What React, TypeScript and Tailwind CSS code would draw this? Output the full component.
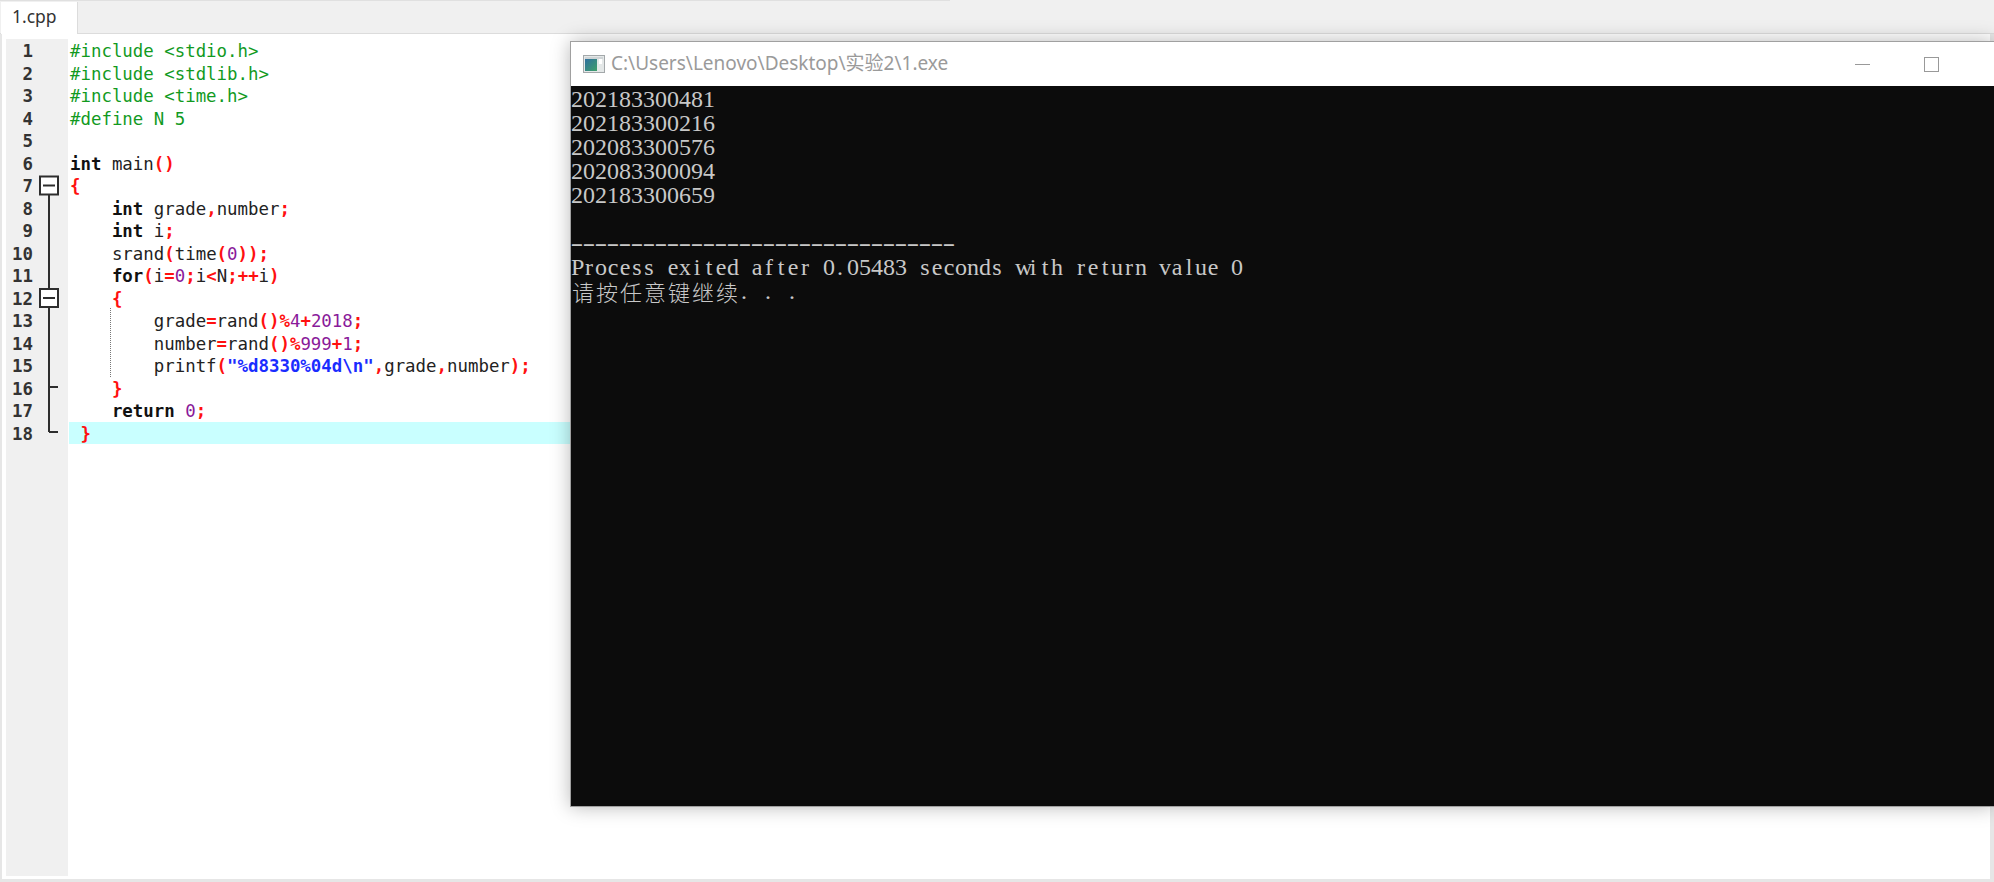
const codeFont = "font-['DejaVu_Sans_Mono','Liberation_Mono',monospace]";

type Kind = "k" | "t" | "p" | "n" | "s" | "d" | "x";
type Tok = [Kind, string];

const kindClass: Record<Kind, string> = {
  k: "font-bold text-[#111111]",
  t: "text-[#222222]",
  p: "font-bold text-[#ff1010]",
  n: "text-[#8a1a9a]",
  s: "font-bold text-[#1a2cff]",
  d: "text-[#129a1f]",
  x: "text-[#222222]",
};

const lines: Tok[][] = [
  [["d", "#include <stdio.h>"]],
  [["d", "#include <stdlib.h>"]],
  [["d", "#include <time.h>"]],
  [["d", "#define N 5"]],
  [],
  [["k", "int"], ["t", " main"], ["p", "()"]],
  [["p", "{"]],
  [["t", "    "], ["k", "int"], ["t", " grade"], ["p", ","], ["t", "number"], ["p", ";"]],
  [["t", "    "], ["k", "int"], ["t", " i"], ["p", ";"]],
  [["t", "    srand"], ["p", "("], ["t", "time"], ["p", "("], ["n", "0"], ["p", "));"]],
  [["t", "    "], ["k", "for"], ["p", "("], ["t", "i"], ["p", "="], ["n", "0"], ["p", ";"], ["t", "i"], ["p", "<"], ["t", "N"], ["p", ";++"], ["t", "i"], ["p", ")"]],
  [["t", "    "], ["p", "{"]],
  [["t", "        grade"], ["p", "="], ["t", "rand"], ["p", "()%"], ["n", "4"], ["p", "+"], ["n", "2018"], ["p", ";"]],
  [["t", "        number"], ["p", "="], ["t", "rand"], ["p", "()%"], ["n", "999"], ["p", "+"], ["n", "1"], ["p", ";"]],
  [["t", "        printf"], ["p", "("], ["s", "\"%d8330%04d\\n\""], ["p", ","], ["t", "grade"], ["p", ","], ["t", "number"], ["p", ");"]],
  [["t", "    "], ["p", "}"]],
  [["t", "    "], ["k", "return"], ["t", " "], ["n", "0"], ["p", ";"]],
  [["t", " "], ["p", "}"]],
];

function Fold() {
  const stroke = "#2e2e2e";
  return (
    <svg className="absolute left-0 top-0" width="64" height="445" viewBox="0 0 64 445" fill="none">
      <path d="M49 195V288M49 307V432M49 387H58M49 432H58" stroke={stroke} strokeWidth="2" />
      <rect x="40" y="176.5" width="18" height="18" fill="#fff" stroke={stroke} strokeWidth="2" />
      <path d="M43 185.5H55" stroke={stroke} strokeWidth="2" />
      <rect x="40" y="289" width="18" height="18" fill="#fff" stroke={stroke} strokeWidth="2" />
      <path d="M43 298H55" stroke={stroke} strokeWidth="2" />
    </svg>
  );
}

function Term({ text }: { text: string }) {
  return (
    <div className="h-[24px] flex leading-[24px]">
      {Array.from(text).map((c, i) => {
        const cjk = c.charCodeAt(0) > 255;
        if (c === "-")
          return (
            <span key={i} className="inline-block w-[12px] text-center scale-x-[1.6]">
              -
            </span>
          );
        return (
          <span
            key={i}
            className={
              cjk
                ? "inline-block w-[24px] text-center font-['Noto_Sans_CJK_SC',serif] font-light text-[22px]"
                : c === "."
                  ? "inline-block w-[12px] pl-[2px] text-left"
                  : "inline-block w-[12px] text-center whitespace-pre"
            }
          >
            {c}
          </span>
        );
      })}
    </div>
  );
}

const output = [
  "202183300481",
  "202183300216",
  "202083300576",
  "202083300094",
  "202183300659",
  " ",
  "--------------------------------",
  "Process exited after 0.05483 seconds with return value 0",
  "请按任意键继续. . .",
];

function ConsoleIcon() {
  return (
    <svg width="22" height="18" viewBox="0 0 22 18" fill="none">
      <defs>
        <linearGradient id="cg" x1="0" y1="0" x2="1" y2="1">
          <stop offset="0" stopColor="#2f6f9f" />
          <stop offset="1" stopColor="#3fa06a" />
        </linearGradient>
      </defs>
      <rect x="0.5" y="0.5" width="21" height="17" fill="#e4e8e8" stroke="#a3a8aa" />
      <rect x="2" y="2" width="18" height="2" fill="#cfd4d6" />
      <rect x="2" y="4" width="12" height="12" fill="url(#cg)" />
      <rect x="16" y="4" width="3" height="5" fill="#ffffff" />
    </svg>
  );
}

export default function App() {
  return (
    <div className="relative w-[1994px] h-[882px] overflow-hidden bg-white flex flex-col font-['Noto_Sans',sans-serif]">
      <div className="h-[34px] shrink-0 flex bg-[#f0f0f0] border-b border-[#dcdcdc]">
        <div className="absolute left-0 top-0 w-[950px] h-px bg-[#e0e0e0]" />
        <div className="w-[77px] mt-[2px] ml-[1px] h-[32px] bg-white border-r border-[#dcdcdc] pl-[11px] text-[17.5px] leading-[29px] text-[#333333]">
          1.cpp
        </div>
      </div>

      <div className="flex-1 flex border-l-[2px] border-r-[4px] border-b-[3px] border-[#e6e6e6] min-h-0">
        <div className="ml-[4px] mt-[5px] mb-[3px] w-[62px] shrink-0 bg-[#f0f0f0]">
          {lines.map((_, i) => (
            <div
              key={i}
              className={`h-[22.5px] pt-px w-[27px] text-right text-[17.4px] leading-[22.5px] font-bold text-[#333333] ${codeFont}`}
            >
              {i + 1}
            </div>
          ))}
        </div>
        <div className={`flex-1 ml-px mt-[5px] text-[17.4px] leading-[22.5px] ${codeFont}`}>
          {lines.map((toks, i) => (
            <div key={i} className={`h-[22.5px] pt-px pl-px whitespace-pre ${i === 17 ? "bg-[#c9ffff]" : ""}`}>
              {toks.map((t, j) => (
                <span key={j} className={kindClass[t[0]]}>
                  {t[1]}
                </span>
              ))}
            </div>
          ))}
        </div>
      </div>

      <Fold />
      <div className="absolute left-[110px] top-[308px] h-[69px] border-l border-dotted border-[#777777]" />

      <div className="absolute left-[570px] top-[41px] w-[1424px] h-[766px] flex flex-col border-t-[1px] border-l-[1px] border-b-[1px] border-[#a0a0a0] shadow-[0_0_18px_rgba(0,0,0,0.28)]">
        <div className="h-[44px] shrink-0 bg-white flex items-center pl-[12px]">
          <ConsoleIcon />
          <div className="ml-[6px] mb-[2px] text-[19px] text-[#9a9a9a] font-['Noto_Sans','Noto_Sans_CJK_SC',sans-serif] whitespace-pre">
            {"C:\\Users\\Lenovo\\Desktop\\实验2\\1.exe"}
          </div>
          <div className="ml-auto mr-[55px] flex items-center gap-[54px]">
            <div className="w-[15px] h-px bg-[#999999]" />
            <div className="w-[15px] h-[15px] border border-[#999999]" />
          </div>
        </div>
        <div className="flex-1 bg-[#0c0c0c] pt-[1px] text-[#c8c8c8] text-[24px] font-['Liberation_Serif','Noto_Sans_CJK_SC',serif]">
          {output.map((l, i) => (
            <Term key={i} text={l} />
          ))}
        </div>
      </div>
    </div>
  );
}
